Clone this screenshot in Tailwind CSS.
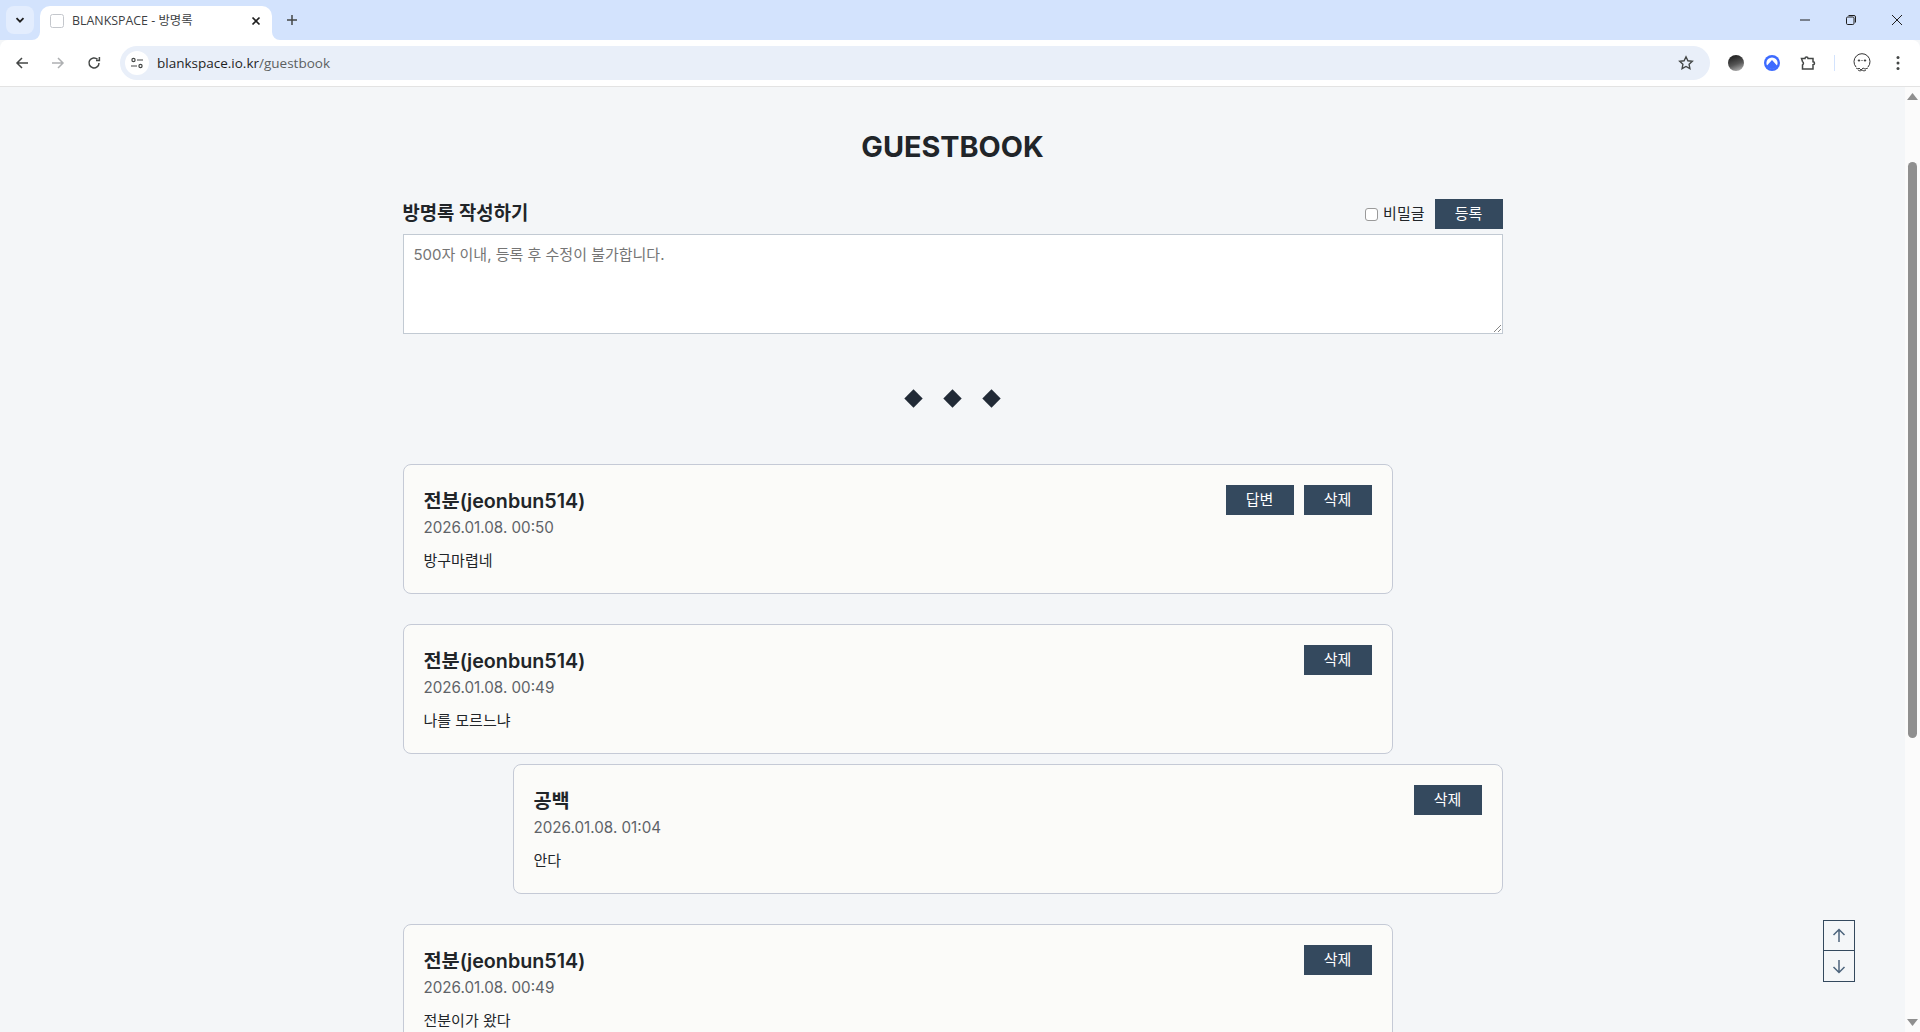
<!DOCTYPE html>
<html lang="ko">
<head>
<meta charset="UTF-8">
<title>BLANKSPACE - 방명록</title>
<script src="https://cdn.jsdelivr.net/npm/@tailwindcss/browser@4"></script>
</head>
<body class="h-[1032px] w-[1920px] overflow-hidden bg-[#f4f6f8] font-['Inter','Noto_Sans_CJK_KR',sans-serif] text-[#212529]">

<!-- Tab strip -->
<div class="flex h-[40px] items-start bg-[#d3e3fd] pl-[6px] pt-[6px]">
  <div class="flex h-[28px] w-[28px] items-center justify-center rounded-lg bg-[#e3edfe]">
    <svg width="12" height="12" viewBox="0 0 12 12" fill="none" stroke="#1f1f1f" stroke-width="1.8"><path d="M2.5 4.2 6 7.7l3.5-3.5"/></svg>
  </div>
  <div class="relative ml-[6px] flex h-[34px] w-[232px] items-center rounded-t-[10px] bg-white pb-[5px] pl-[10px] pr-[11px]">
    <svg class="absolute bottom-0 left-[-8px]" width="8" height="8" viewBox="0 0 8 8"><path d="M8 0v8H0a8 8 0 0 0 8-8z" fill="#fff"/></svg>
    <svg class="absolute bottom-0 right-[-8px]" width="8" height="8" viewBox="0 0 8 8"><path d="M0 0v8h8a8 8 0 0 1-8-8z" fill="#fff"/></svg>
    <svg width="14" height="14" viewBox="0 0 14 14" fill="none" stroke="#c4c7cc" stroke-width="1"><rect x=".5" y=".5" width="13" height="13" rx="2"/></svg>
    <span class="ml-[8px] pt-[2px] font-['Open_Sans','Noto_Sans_CJK_KR',sans-serif] text-[12.4px] text-[#3c4043]">BLANKSPACE - 방명록</span>
    <svg class="ml-auto" width="10" height="10" viewBox="0 0 10 10" stroke="#1f1f1f" stroke-width="1.7"><path d="M1.5 1.5l7 7M8.5 1.5l-7 7"/></svg>
  </div>
  <div class="ml-[14px] flex h-[28px] w-[12px] items-center justify-center">
    <svg width="12" height="12" viewBox="0 0 12 12" stroke="#444746" stroke-width="1.5"><path d="M6 1v10M1 6h10"/></svg>
  </div>
  <div class="ml-auto flex h-[28px] items-center pr-[17px]">
    <svg width="12" height="12" viewBox="0 0 12 12" stroke="#1f1f1f" stroke-width="1"><path d="M1 6h10"/></svg>
    <svg class="ml-[34px]" width="12" height="12" viewBox="0 0 12 12" fill="none" stroke="#1f1f1f" stroke-width="1"><rect x="1.5" y="3" width="7.5" height="7.5" rx="1.2"/><path d="M3.5 1.5h5.5a1.5 1.5 0 0 1 1.5 1.5v5.5"/></svg>
    <svg class="ml-[34px]" width="12" height="12" viewBox="0 0 12 12" stroke="#1f1f1f" stroke-width="1"><path d="M1 1l10 10M11 1 1 11"/></svg>
  </div>
</div>

<!-- Toolbar -->
<div class="flex h-[46px] items-center rounded-t-[8px] bg-white">
  <div class="flex w-[120px] items-center pl-[15px]">
    <svg width="14" height="14" viewBox="0 0 14 14" fill="none" stroke="#444746" stroke-width="1.5"><path d="M13 7H2M7 2 2 7l5 5"/></svg>
    <svg class="ml-[22px]" width="14" height="14" viewBox="0 0 14 14" fill="none" stroke="#aeb0b2" stroke-width="1.5"><path d="M1 7h11M7 2l5 5-5 5"/></svg>
    <svg class="ml-[22px]" width="14" height="14" viewBox="0 0 14 14" fill="none" stroke="#444746" stroke-width="1.5"><path d="M12 7a5 5 0 1 1-1.5-3.6"/><path d="M12.4 1v3.4H9" /></svg>
  </div>
  <div class="flex h-[34px] w-[1590px] items-center rounded-full bg-[#e9eff9] pl-[5px]">
    <div class="flex h-[24px] w-[24px] items-center justify-center rounded-full bg-white">
      <svg width="14" height="12" viewBox="0 0 14 12" fill="none" stroke="#444746" stroke-width="1.2"><circle cx="3.5" cy="3" r="1.6"/><path d="M7 3h6M1 9h6"/><circle cx="10.5" cy="9" r="1.6"/></svg>
    </div>
    <span class="ml-[8px] font-['Open_Sans',sans-serif] text-[13.5px] text-[#1f1f1f]">blankspace.io.kr<span class="text-[#5c5f61]">/guestbook</span></span>
    <svg class="ml-auto mr-[16px]" width="16" height="16" viewBox="0 0 16 16" fill="none" stroke="#444746" stroke-width="1.4"><path d="M8 1.8l1.9 4 4.4.5-3.2 3 .8 4.3L8 11.5l-3.9 2.1.8-4.3-3.2-3 4.4-.5z"/></svg>
  </div>
  <div class="flex flex-1 items-center pl-[18px]">
    <div class="h-[16px] w-[16px] rounded-full bg-[linear-gradient(160deg,#2a2a2a_20%,#555_55%,#c4c4c4_100%)]"></div>
    <svg class="ml-[20px]" width="16" height="16" viewBox="0 0 16 16"><circle cx="8" cy="8" r="8" fill="#3d6bff"/><circle cx="8" cy="8" r="5.6" fill="#fff"/><path d="M2.6 11 8 5l5.4 6a6.4 6.4 0 0 1-10.8 0z" fill="#3d6bff"/></svg>
    <svg class="ml-[20px]" width="16" height="16" viewBox="0 0 16 16" fill="none" stroke="#444746" stroke-width="1.5"><path d="M1.5 3.5h3.5a1.5 1.5 0 0 1 3 0h5v3.2a1.5 1.5 0 0 1 0 3v4.3H2.5V10a2 2 0 0 0 0-3.4z"/></svg>
    <div class="ml-[18px] h-[16px] w-[1px] bg-[#d3e3fd]"></div>
    <svg class="ml-[18px]" width="18" height="20" viewBox="0 0 18 20" fill="none" stroke="#333" stroke-width="1"><path d="M3 14a8 8 0 1 1 12 0"/><path d="M3 15l2 1 1-1 2 2 2-2 2 1 3-1M5 17l2 1 2-1 2 1 2-1" stroke-width=".9"/><circle cx="6" cy="7.5" r=".7" fill="#333"/><path d="M8.5 7.5h1"/><circle cx="12" cy="7.5" r=".7" fill="#333"/></svg>
    <svg class="ml-[25px]" width="4" height="16" viewBox="0 0 4 16" fill="#444746"><circle cx="2" cy="2.5" r="1.5"/><circle cx="2" cy="8" r="1.5"/><circle cx="2" cy="13.5" r="1.5"/></svg>
  </div>
</div>
<div class="h-[1px] bg-[#e3e3e3]"></div>

<!-- Viewport -->
<div class="relative flex h-[945px] overflow-hidden">
  <main class="h-full w-[1905px] overflow-hidden">
    <div class="mx-auto w-[1100px]">
      <h1 class="mt-[40px] text-center text-[28.8px] leading-[40px] font-bold">GUESTBOOK</h1>

      <div class="mt-[32px] flex h-[30px] items-center justify-between">
        <h2 class="text-[18.8px] font-semibold">방명록 작성하기</h2>
        <div class="flex items-center">
          <span class="h-[13px] w-[13px] rounded-[3px] border border-[#9a9a9a] bg-white"></span>
          <span class="ml-[5px] text-[15px]">비밀글</span>
          <button class="ml-[10px] h-[30px] w-[68px] bg-[#34495e] text-[15px] text-white">등록</button>
        </div>
      </div>

      <div class="relative mt-[5px] h-[100px] border border-[#c2cad3] bg-white px-[10px] pt-[10px] text-[15px] leading-[20px] text-[#757575]">
        500자 이내, 등록 후 수정이 불가합니다.
        <svg class="absolute right-[1px] bottom-[1px]" width="8" height="8" viewBox="0 0 8 8" stroke="#666" stroke-width=".8"><path d="M1 8l7-7M5 8l3-3"/></svg>
      </div>

      <div class="mt-[56px] flex h-[16px] items-center justify-center gap-[26px]">
        <span class="h-[13px] w-[13px] rotate-45 bg-[#212a36]"></span>
        <span class="h-[13px] w-[13px] rotate-45 bg-[#212a36]"></span>
        <span class="h-[13px] w-[13px] rotate-45 bg-[#212a36]"></span>
      </div>

      <article class="mt-[58px] h-[130px] w-[990px] rounded-lg border border-[#c5cad6] bg-[#fbfbf9] p-[20px]">
        <div class="flex justify-between">
          <div>
            <h3 class="mt-[1px] text-[19.7px] leading-[30px] font-semibold">전분(jeonbun514)</h3>
            <p class="mt-[1px] text-[15.2px] leading-[21px] text-[#5f6368]">2026.01.08. 00:50</p>
          </div>
          <div class="flex gap-[10px]">
            <button class="h-[30px] w-[68px] bg-[#34495e] text-[15px] text-white">답변</button>
            <button class="h-[30px] w-[68px] bg-[#34495e] text-[15px] text-white">삭제</button>
          </div>
        </div>
        <p class="mt-[13px] text-[15px] leading-[20px]">방구마렵네</p>
      </article>

      <article class="mt-[30px] h-[130px] w-[990px] rounded-lg border border-[#c5cad6] bg-[#fbfbf9] p-[20px]">
        <div class="flex justify-between">
          <div>
            <h3 class="mt-[1px] text-[19.7px] leading-[30px] font-semibold">전분(jeonbun514)</h3>
            <p class="mt-[1px] text-[15.2px] leading-[21px] text-[#5f6368]">2026.01.08. 00:49</p>
          </div>
          <button class="h-[30px] w-[68px] bg-[#34495e] text-[15px] text-white">삭제</button>
        </div>
        <p class="mt-[13px] text-[15px] leading-[20px]">나를 모르느냐</p>
      </article>

      <article class="mt-[10px] ml-[110px] h-[130px] w-[990px] rounded-lg border border-[#c5cad6] bg-[#fbfbf9] p-[20px]">
        <div class="flex justify-between">
          <div>
            <h3 class="mt-[1px] text-[19.7px] leading-[30px] font-semibold">공백</h3>
            <p class="mt-[1px] text-[15.2px] leading-[21px] text-[#5f6368]">2026.01.08. 01:04</p>
          </div>
          <button class="h-[30px] w-[68px] bg-[#34495e] text-[15px] text-white">삭제</button>
        </div>
        <p class="mt-[13px] text-[15px] leading-[20px]">안다</p>
      </article>

      <article class="mt-[30px] h-[130px] w-[990px] rounded-lg border border-[#c5cad6] bg-[#fbfbf9] p-[20px]">
        <div class="flex justify-between">
          <div>
            <h3 class="mt-[1px] text-[19.7px] leading-[30px] font-semibold">전분(jeonbun514)</h3>
            <p class="mt-[1px] text-[15.2px] leading-[21px] text-[#5f6368]">2026.01.08. 00:49</p>
          </div>
          <button class="h-[30px] w-[68px] bg-[#34495e] text-[15px] text-white">삭제</button>
        </div>
        <p class="mt-[13px] text-[15px] leading-[20px]">전분이가 왔다</p>
      </article>
    </div>
  </main>

  <!-- Scrollbar -->
  <div class="flex w-[15px] flex-col items-center bg-[#fbfbfb]">
    <svg class="mt-[6px]" width="11" height="7" viewBox="0 0 11 7" fill="#8f8f8f"><path d="M5.5 0 11 7H0z"/></svg>
    <div class="mt-[62px] h-[576px] w-[9px] rounded-full bg-[#8f8f8f]"></div>
    <svg class="mt-auto mb-[6px]" width="11" height="7" viewBox="0 0 11 7" fill="#8f8f8f"><path d="M5.5 7 11 0H0z"/></svg>
  </div>

  <!-- Floating up/down -->
  <div class="absolute left-[1823px] top-[833px] flex w-[32px] flex-col border border-[#34495e]">
    <div class="flex h-[30px] items-center justify-center border-b border-[#34495e]">
      <svg width="14" height="15" viewBox="0 0 14 15" fill="none" stroke="#4d647c" stroke-width="1.5"><path d="M7 14V2M1.5 7 7 1.5 12.5 7"/></svg>
    </div>
    <div class="flex h-[30px] items-center justify-center">
      <svg width="14" height="15" viewBox="0 0 14 15" fill="none" stroke="#4d647c" stroke-width="1.5"><path d="M7 1v12M1.5 8 7 13.5 12.5 8"/></svg>
    </div>
  </div>
</div>
</body>
</html>
